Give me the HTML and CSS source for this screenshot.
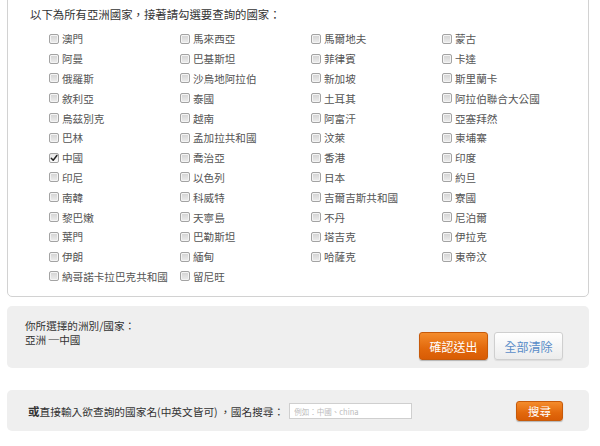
FILE: index.html
```html
<!DOCTYPE html>
<html lang="zh-Hant">
<head>
<meta charset="utf-8">
<title>亞洲國家選擇</title>
<link rel="stylesheet" href="styles.css">
</head>
<body>
<div class="page">
  <section class="panel countries">
    <p class="intro">以下為所有亞洲國家，接著請勾選要查詢的國家：</p>
    <ul class="grid">
      <li><span class="cb"></span>澳門</li>
      <li><span class="cb"></span>馬來西亞</li>
      <li><span class="cb"></span>馬爾地夫</li>
      <li><span class="cb"></span>蒙古</li>
      <li><span class="cb"></span>阿曼</li>
      <li><span class="cb"></span>巴基斯坦</li>
      <li><span class="cb"></span>菲律賓</li>
      <li><span class="cb"></span>卡達</li>
      <li><span class="cb"></span>俄羅斯</li>
      <li><span class="cb"></span>沙烏地阿拉伯</li>
      <li><span class="cb"></span>新加坡</li>
      <li><span class="cb"></span>斯里蘭卡</li>
      <li><span class="cb"></span>敘利亞</li>
      <li><span class="cb"></span>泰國</li>
      <li><span class="cb"></span>土耳其</li>
      <li><span class="cb"></span>阿拉伯聯合大公國</li>
      <li><span class="cb"></span>烏茲別克</li>
      <li><span class="cb"></span>越南</li>
      <li><span class="cb"></span>阿富汗</li>
      <li><span class="cb"></span>亞塞拜然</li>
      <li><span class="cb"></span>巴林</li>
      <li><span class="cb"></span>孟加拉共和國</li>
      <li><span class="cb"></span>汶萊</li>
      <li><span class="cb"></span>柬埔寨</li>
      <li><span class="cb checked"><svg viewBox="0 0 10 10" width="10" height="10"><path d="M1.6 5.2 L4 7.8 L8.6 1.8" fill="none" stroke="#222" stroke-width="1.8" stroke-linecap="round" stroke-linejoin="round"/></svg></span>中國</li>
      <li><span class="cb"></span>喬治亞</li>
      <li><span class="cb"></span>香港</li>
      <li><span class="cb"></span>印度</li>
      <li><span class="cb"></span>印尼</li>
      <li><span class="cb"></span>以色列</li>
      <li><span class="cb"></span>日本</li>
      <li><span class="cb"></span>約旦</li>
      <li><span class="cb"></span>南韓</li>
      <li><span class="cb"></span>科威特</li>
      <li><span class="cb"></span>吉爾吉斯共和國</li>
      <li><span class="cb"></span>寮國</li>
      <li><span class="cb"></span>黎巴嫩</li>
      <li><span class="cb"></span>天寧島</li>
      <li><span class="cb"></span>不丹</li>
      <li><span class="cb"></span>尼泊爾</li>
      <li><span class="cb"></span>葉門</li>
      <li><span class="cb"></span>巴勒斯坦</li>
      <li><span class="cb"></span>塔吉克</li>
      <li><span class="cb"></span>伊拉克</li>
      <li><span class="cb"></span>伊朗</li>
      <li><span class="cb"></span>緬甸</li>
      <li><span class="cb"></span>哈薩克</li>
      <li><span class="cb"></span>東帝汶</li>
      <li><span class="cb"></span>納哥諾卡拉巴克共和國</li>
      <li><span class="cb"></span>留尼旺</li>
    </ul>
  </section>

  <section class="panel gray selected">
    <div class="sel-text">
      <div class="sel-line">你所選擇的洲別/國家：</div>
      <div class="sel-line">亞洲 ─中國</div>
    </div>
    <div class="actions">
      <button class="btn orange big">確認送出</button>
      <button class="btn light big">全部清除</button>
    </div>
  </section>

  <section class="panel gray search">
    <div class="search-left">
      <span class="search-label"><b>或</b>直接輸入欲查詢的國家名(中英文皆可) ，國名搜尋：</span>
      <input class="search-input" type="text" placeholder="例如：中國、china">
    </div>
    <button class="btn orange small">搜尋</button>
  </section>
</div>
</body>
</html>
```

FILE: styles.css
```css
* { box-sizing: border-box; }

body {
  margin: 0;
  background: #fff;
  font-family: "Noto Sans CJK TC", "Noto Sans", sans-serif;
  color: #333;
}

.page {
  padding: 0 11px 0 7px;
}

.panel {
  border-radius: 5px;
}

.countries {
  margin-top: -6px;
  border: 1px solid #d2d2d2;
  padding: 11px 0 10px 0;
}

.intro {
  margin: 0 0 7px 22px;
  font-size: 11.4px;
  line-height: 16px;
  color: #333;
}

.grid {
  list-style: none;
  margin: 0;
  padding: 0 0 0 41px;
  display: grid;
  grid-template-columns: repeat(4, 131px);
  grid-auto-rows: 19.8px;
}

.grid li {
  display: flex;
  align-items: center;
  gap: 3px;
  font-size: 10.6px;
  color: #555;
  white-space: nowrap;
}

.cb {
  flex: none;
  width: 10px;
  height: 10px;
  border: 1px solid #a3a3a3;
  border-radius: 2px;
  background: linear-gradient(#d2d2d2, #ededed);
  box-shadow: inset 0 0 0 1px #f4f4f4;
  display: flex;
  align-items: center;
  justify-content: center;
}

.cb.checked {
  background: linear-gradient(#e8e8e8, #fafafa);
  box-shadow: none;
}

.cb svg { display: block; }

.gray {
  background: #efefef;
}

.selected {
  margin-top: 9px;
  height: 62px;
  padding: 12px 26px 8px 18px;
  display: flex;
  justify-content: space-between;
  align-items: flex-end;
}

.sel-text {
  align-self: flex-start;
  display: flex;
  flex-direction: column;
  gap: 0;
}

.sel-line {
  font-size: 10.6px;
  line-height: 15px;
  height: 14px;
  color: #333;
}

.actions {
  display: flex;
  gap: 6px;
}

.btn {
  font-family: "Noto Sans CJK TC", "Noto Sans", sans-serif;
  border-radius: 3px;
  padding: 0;
  cursor: pointer;
}

.btn.big {
  width: 69px;
  height: 28px;
  font-size: 12px;
}

.btn.small {
  width: 47px;
  height: 20px;
  font-size: 11.5px;
}

.btn.orange {
  color: #fff;
  border: 1px solid #c75a0a;
  background: linear-gradient(#f48c2c, #e2680c 60%, #d85c05);
  box-shadow: 0 1px 1px rgba(0,0,0,0.25);
}

.btn.light {
  color: #5a8dc8;
  border: 1px solid #cfcfcf;
  background: linear-gradient(#ffffff, #ececec);
  box-shadow: 0 1px 1px rgba(0,0,0,0.08);
}

.search {
  margin-top: 22px;
  height: 41px;
  padding: 0 26px 0 21px;
  display: flex;
  align-items: center;
  justify-content: space-between;
}

.search-left {
  display: flex;
  align-items: center;
  gap: 5px;
}

.search-label {
  font-size: 10.7px;
  color: #333;
}

.search-label b {
  font-weight: bold;
  font-size: 11.5px;
}

.search-input {
  width: 123px;
  height: 16px;
  border: 1px solid #cfcfcf;
  background: #fff;
  padding: 0 4px;
  font-size: 7.5px;
  font-family: "Noto Sans CJK TC", "Noto Sans", sans-serif;
  outline: none;
  margin-top: 1px;
}

.search-input::placeholder {
  color: #bbb;
}
```
